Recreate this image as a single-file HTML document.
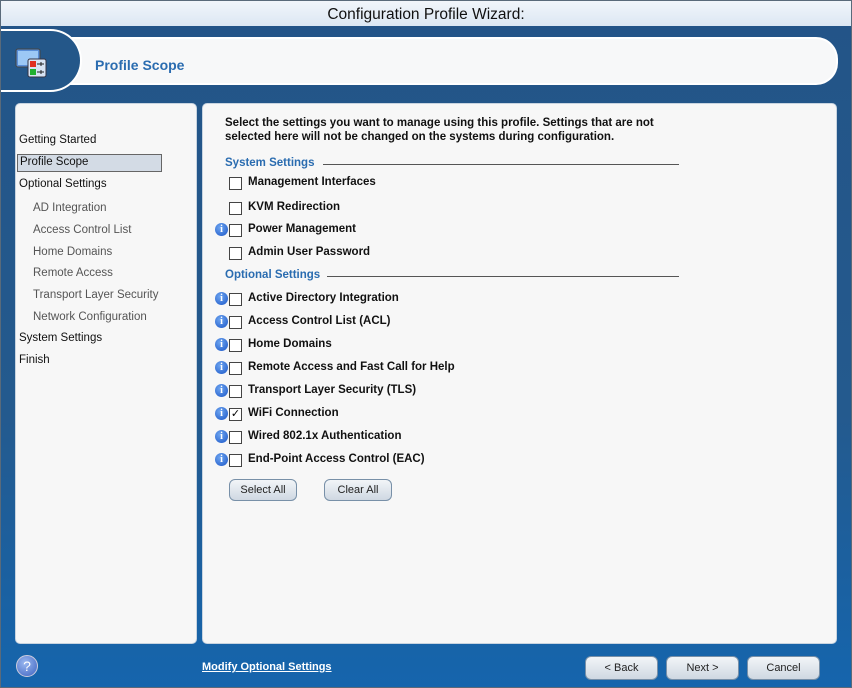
<!DOCTYPE html>
<html><head><style>
*{margin:0;padding:0;box-sizing:border-box}
body{width:852px;height:688px;overflow:hidden;font-family:"Liberation Sans",sans-serif;background:#fff;position:relative}
.win{position:absolute;left:0;top:0;width:852px;height:688px;background:linear-gradient(#235487 0%,#245a8e 60%,#1565ad 100%)}
.frame{position:absolute;left:0;top:0;width:852px;height:688px;border:1px solid #5a6a7a;pointer-events:none}
.title{position:absolute;left:0;top:0;width:852px;height:26px;background:linear-gradient(#f2f6fb,#dce7f3);text-align:center;font-size:15.5px;line-height:29px;color:#111}
.hdr{position:absolute;left:40px;top:37px;width:798px;height:48px;background:#f7f8f9;border:2px solid #fff;border-left:none;border-radius:0 22px 22px 0}
.tab{position:absolute;left:0;top:29px;width:82px;height:63px;background:#245789;border:2px solid #fff;border-left:none;border-radius:0 40px 40px 0}
.htitle{position:absolute;left:95px;top:57px;font-size:14px;font-weight:bold;color:#2a6cb0}
.pl{position:absolute;left:15px;top:103px;width:182px;height:541px;background:#f7f7f7;border:1px solid #c8d4e0;border-radius:5px}
.pr{position:absolute;left:202px;top:103px;width:635px;height:541px;background:#f7f7f7;border:1px solid #c8d4e0;border-radius:5px}
.nav{position:absolute;font-size:11.5px;color:#111}
.sub{color:#555}
.sel{position:absolute;left:17px;top:154px;width:145px;height:18px;background:#d3dbe5;border:1px solid #666}
.t{position:absolute;font-size:11.5px;font-weight:bold;color:#111}
.sec{position:absolute;font-size:11.5px;font-weight:bold;color:#2a6cb0}
.line{position:absolute;height:1px;background:#555}
.cb{position:absolute;left:229px;width:13px;height:13px;border:1px solid #444;background:#fff;font-size:11px;line-height:11px;text-align:center}
.i{position:absolute;left:215px;width:13px;height:13px;border-radius:50%;background:radial-gradient(circle at 40% 35%,#6fa6f0,#1a56c8);color:#fff;font:bold 10px "Liberation Serif",serif;text-align:center;line-height:13px}
.btn{position:absolute;height:22px;border:1px solid #7890a8;border-radius:6px;background:linear-gradient(#f2f5f8,#cfd8e2);font-size:11px;text-align:center;line-height:20px;color:#222}
</style></head><body>
<div class="win">
<div class="title">Configuration Profile Wizard:</div>
<div class="hdr"></div>
<div class="tab">
<svg width="36" height="34" style="position:absolute;left:14px;top:16px" viewBox="0 0 36 34"><rect x="2" y="2" width="24" height="18" rx="2" fill="#5a8fd8" stroke="#444"/><rect x="4" y="4" width="20" height="14" fill="#9cc8f5"/><rect x="14" y="12" width="18" height="18" rx="2" fill="#d8e4f4" stroke="#334"/><rect x="16" y="14" width="6" height="6" fill="#e03020"/><rect x="16" y="22" width="6" height="6" fill="#20b030"/><path d="M23 17h7M27 15v4M23 25h7M27 23v4" stroke="#222"/></svg>
</div>
<div class="htitle">Profile Scope</div>
<div class="pl"></div><div class="pr"></div>
<div class="sel"></div>
<div class="nav" style="left:19px;top:134px">Getting Started</div>
<div class="nav" style="left:20px;top:156px">Profile Scope</div>
<div class="nav" style="left:19px;top:178px">Optional Settings</div>
<div class="nav sub" style="left:33px;top:202px">AD Integration</div>
<div class="nav sub" style="left:33px;top:224px">Access Control List</div>
<div class="nav sub" style="left:33px;top:246px">Home Domains</div>
<div class="nav sub" style="left:33px;top:267px">Remote Access</div>
<div class="nav sub" style="left:33px;top:289px">Transport Layer Security</div>
<div class="nav sub" style="left:33px;top:311px">Network Configuration</div>
<div class="nav" style="left:19px;top:332px">System Settings</div>
<div class="nav" style="left:19px;top:354px">Finish</div>
<div class="t" style="left:225px;top:116px;line-height:14px">Select the settings you want to manage using this profile. Settings that are not<br>selected here will not be changed on the systems during configuration.</div>
<div class="sec" style="left:225px;top:157px">System Settings</div><div class="line" style="left:323px;top:164px;width:356px"></div>
<div class="cb" style="top:177px"></div><div class="t" style="left:248px;top:176px">Management Interfaces</div>
<div class="cb" style="top:202px"></div><div class="t" style="left:248px;top:201px">KVM Redirection</div>
<div class="i" style="top:223px">i</div><div class="cb" style="top:224px"></div><div class="t" style="left:248px;top:223px">Power Management</div>
<div class="cb" style="top:247px"></div><div class="t" style="left:248px;top:246px">Admin User Password</div>
<div class="sec" style="left:225px;top:269px">Optional Settings</div><div class="line" style="left:327px;top:276px;width:352px"></div>
<div class="i" style="top:292px">i</div><div class="cb" style="top:293px"></div><div class="t" style="left:248px;top:292px">Active Directory Integration</div>
<div class="i" style="top:315px">i</div><div class="cb" style="top:316px"></div><div class="t" style="left:248px;top:315px">Access Control List (ACL)</div>
<div class="i" style="top:338px">i</div><div class="cb" style="top:339px"></div><div class="t" style="left:248px;top:338px">Home Domains</div>
<div class="i" style="top:361px">i</div><div class="cb" style="top:362px"></div><div class="t" style="left:248px;top:361px">Remote Access and Fast Call for Help</div>
<div class="i" style="top:384px">i</div><div class="cb" style="top:385px"></div><div class="t" style="left:248px;top:384px">Transport Layer Security (TLS)</div>
<div class="i" style="top:407px">i</div><div class="cb" style="top:408px">✓</div><div class="t" style="left:248px;top:407px">WiFi Connection</div>
<div class="i" style="top:430px">i</div><div class="cb" style="top:431px"></div><div class="t" style="left:248px;top:430px">Wired 802.1x Authentication</div>
<div class="i" style="top:453px">i</div><div class="cb" style="top:454px"></div><div class="t" style="left:248px;top:453px">End-Point Access Control (EAC)</div>
<div class="btn" style="left:229px;top:479px;width:68px">Select All</div>
<div class="btn" style="left:324px;top:479px;width:68px">Clear All</div>
<div style="position:absolute;left:16px;top:655px;width:22px;height:22px;border-radius:50%;background:radial-gradient(circle at 40% 35%,#9ab8f0,#3d62c0);border:1px solid #ccd;color:#fff;text-align:center;font-size:14px;line-height:20px">?</div>
<div style="position:absolute;left:202px;top:661px;font-size:11px;font-weight:bold;color:#fff;text-decoration:underline">Modify Optional Settings</div>
<div class="btn" style="left:585px;top:656px;width:73px;height:24px;line-height:22px">&lt; Back</div>
<div class="btn" style="left:666px;top:656px;width:73px;height:24px;line-height:22px">Next &gt;</div>
<div class="btn" style="left:747px;top:656px;width:73px;height:24px;line-height:22px">Cancel</div>
</div>
<div class="frame"></div>
</body></html>
